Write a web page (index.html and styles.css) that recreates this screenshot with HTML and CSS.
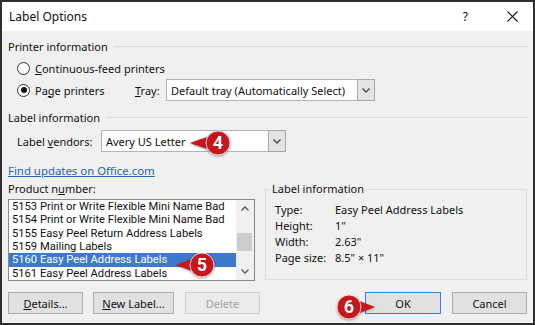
FILE: index.html
```html
<!DOCTYPE html>
<html>
<head>
<meta charset="utf-8">
<link rel="stylesheet" href="styles.css">
</head>
<body>
<div class="window">
  <div class="titlebar">
    <span class="title">Label Options</span>
    <span class="help">?</span>
    <svg class="close" width="11" height="11" viewBox="0 0 11 11"><path d="M0.5 0.5L10.5 10.5M10.5 0.5L0.5 10.5" stroke="#111" stroke-width="1.1" fill="none"/></svg>
  </div>
  <div class="body">
    <div class="section-title"><span>Printer information</span><span class="rule"></span></div>
    <div class="row radio-row r1">
      <span class="radio"></span><span><u>C</u>ontinuous-feed printers</span>
    </div>
    <div class="row radio-row">
      <div class="radio-opt"><span class="radio checked"></span><span>Pa<u>g</u>e printers</span></div>
      <span class="tray-label"><u>T</u>ray:</span>
      <div class="combo tray">
        <span class="combo-text">Default tray (Automatically Select)</span>
        <span class="combo-btn"><svg width="8" height="5" viewBox="0 0 8 5"><path d="M0.5 0.5L4 4L7.5 0.5" stroke="#444" stroke-width="1.3" fill="none"/></svg></span>
      </div>
    </div>
    <div class="section-title s2"><span>Label information</span><span class="rule"></span></div>
    <div class="row vendor-row">
      <span class="vendor-label">Label <u>v</u>endors:</span>
      <div class="combo vendor">
        <span class="combo-text">Avery US Letter</span>
        <span class="combo-btn"><svg width="8" height="5" viewBox="0 0 8 5"><path d="M0.5 0.5L4 4L7.5 0.5" stroke="#444" stroke-width="1.3" fill="none"/></svg></span>
      </div>
    </div>
    <a class="link">Find updates on Office.com</a>
    <div class="lower">
      <div class="left">
        <div class="pn-label">Product n<u>u</u>mber:</div>
        <div class="listbox">
          <ul class="items">
            <li>5153 Print or Write Flexible Mini Name Bad</li>
            <li>5154 Print or Write Flexible Mini Name Bad</li>
            <li>5155 Easy Peel Return Address Labels</li>
            <li>5159 Mailing Labels</li>
            <li class="sel">5160 Easy Peel Address Labels</li>
            <li>5161 Easy Peel Address Labels</li>
          </ul>
          <div class="scrollbar">
            <span class="sb-btn"><svg width="8" height="5" viewBox="0 0 8 5"><path d="M0.5 4.5L4 1L7.5 4.5" stroke="#555" stroke-width="1.3" fill="none"/></svg></span>
            <span class="sb-track"><span class="sb-thumb"></span></span>
            <span class="sb-btn"><svg width="8" height="5" viewBox="0 0 8 5"><path d="M0.5 0.5L4 4L7.5 0.5" stroke="#555" stroke-width="1.3" fill="none"/></svg></span>
          </div>
        </div>
      </div>
      <fieldset class="groupbox">
        <legend>Label information</legend>
        <div class="info-row"><span class="k">Type:</span><span>Easy Peel Address Labels</span></div>
        <div class="info-row"><span class="k">Height:</span><span>1"</span></div>
        <div class="info-row"><span class="k">Width:</span><span>2.63"</span></div>
        <div class="info-row"><span class="k">Page size:</span><span>8.5" × 11"</span></div>
      </fieldset>
    </div>
    <div class="buttons">
      <button class="btn w75"><u>D</u>etails...</button>
      <button class="btn w81"><u>N</u>ew Label...</button>
      <button class="btn w75 disabled">Delete</button>
      <button class="btn w76 default">OK</button>
      <button class="btn w75">Cancel</button>
    </div>
  </div>

  <div class="badge b4">
    <svg width="42" height="26" viewBox="0 0 42 26"><path d="M0 13Q9 9.5 19 6.5L19 19.5Q9 16.5 0 13Z" fill="#c8161d"/><circle cx="28" cy="13" r="12" fill="#c8161d" stroke="#fff" stroke-width="0.8"/></svg>
    <span class="digit">4</span>
  </div>
  <div class="badge b5">
    <svg width="40" height="26" viewBox="0 0 40 26"><path d="M0 13Q9 9.5 17 6.5L17 19.5Q9 16.5 0 13Z" fill="#c8161d"/><circle cx="26" cy="13" r="12" fill="#c8161d" stroke="#fff" stroke-width="0.8"/></svg>
    <span class="digit">5</span>
  </div>
  <div class="badge b6">
    <svg width="40" height="26" viewBox="0 0 40 26"><path d="M40 13Q31 9.5 23 6.5L23 19.5Q31 16.5 40 13Z" fill="#c8161d"/><circle cx="14" cy="13" r="12" fill="#c8161d" stroke="#fff" stroke-width="0.8"/></svg>
    <span class="digit">6</span>
  </div>
</div>
</body>
</html>
```

FILE: styles.css
```css
* { box-sizing: border-box; }
html, body { margin: 0; padding: 0; }
body {
  width: 535px;
  height: 325px;
  overflow: hidden;
  font-family: "Noto Sans", "Open Sans", sans-serif;
  font-size: 11px;
  color: #111;
}
.window {
  position: relative;
  width: 535px;
  height: 325px;
  border: 2px solid #2e2e2e;
  background: #f0f0f0;
  display: flex;
  flex-direction: column;
}
.titlebar {
  height: 29px;
  background: #fff;
  display: flex;
  align-items: center;
  padding: 0 15px 1px 7px;
  flex: none;
}
.title { font-size: 12px; flex: 1; }
.help { font-size: 12px; margin-right: 39px; }
.close { display: block; }
.body {
  flex: 1;
  padding: 7px 6px 0 6px;
  display: flex;
  flex-direction: column;
}
.section-title {
  height: 16px;
  display: flex;
  align-items: center;
  gap: 6px;
}
.section-title .rule {
  flex: 1;
  height: 1px;
  background: #dadada;
  margin-right: -1px;
}
.s2 { margin-top: 8px; }
.row {
  height: 22px;
  display: flex;
  align-items: center;
}
.radio-row { padding-left: 9px; }
.r1 { margin-top: 3px; }
.radio {
  width: 13px;
  height: 13px;
  border-radius: 50%;
  border: 1px solid #333;
  background: #fff;
  margin-right: 5px;
  flex: none;
  position: relative;
}
.radio.checked::after {
  content: "";
  position: absolute;
  left: 2.5px;
  top: 2.5px;
  width: 6px;
  height: 6px;
  border-radius: 50%;
  background: #111;
}
.radio-opt {
  width: 118px;
  display: flex;
  align-items: center;
}
.tray-label { width: 31px; }
.combo {
  height: 22px;
  display: flex;
  border: 1px solid #b4b4b4;
  background: #fff;
}
.combo.tray { width: 209px; }
.combo.vendor { width: 185px; }
.combo-text {
  flex: 1;
  display: flex;
  align-items: center;
  padding-left: 4px;
  white-space: nowrap;
  overflow: hidden;
}
.combo-btn {
  width: 18px;
  background: #e4e4e4;
  border: 1px solid #a8a8a8;
  margin: -1px -1px -1px 0;
  display: flex;
  align-items: center;
  justify-content: center;
}
.vendor-row { margin-top: 5px; padding-left: 9px; }
.vendor-label { width: 84px; }
.link {
  margin-top: 11px;
  height: 16px;
  line-height: 16px;
  font-size: 11.4px;
  color: #1f64b8;
  text-decoration: underline;
  align-self: flex-start;
}
.lower {
  margin-top: 2px;
  display: flex;
  gap: 10px;
}
.left { width: 247px; }
.pn-label { height: 16px; line-height: 16px; }
.listbox {
  margin-top: 2px;
  height: 82px;
  border: 1px solid #8a8a8a;
  background: #fff;
  display: flex;
}
.items {
  list-style: none;
  margin: 0;
  padding: 0;
  flex: 1;
  overflow: hidden;
  font-family: "Roboto", "Noto Sans", sans-serif;
  font-size: 11.2px;
}
.items li {
  height: 13.33px;
  line-height: 13.33px;
  padding-left: 3px;
  white-space: nowrap;
  overflow: hidden;
}
.items li.sel { background: #3d7acb; color: #fff; }
.scrollbar {
  width: 18px;
  background: #f0f0f0;
  display: flex;
  flex-direction: column;
}
.sb-btn {
  height: 17px;
  display: flex;
  align-items: center;
  justify-content: center;
}
.sb-track {
  flex: 1;
  padding: 16px 2px 0 1px;
}
.sb-thumb {
  display: block;
  height: 18px;
  background: #cdcdcd;
}
.groupbox {
  flex: 1;
  margin: 0;
  padding: 5px 9px 13px 9px;
  border: 1px solid #dcdcdc;
  min-width: 0;
  height: 99px;
}
.groupbox legend {
  padding: 0 1px;
  margin-left: -4px;
  line-height: 16px;
  font-size: 11px;
}
.info-row {
  height: 16px;
  line-height: 16px;
  display: flex;
}
.info-row .k { width: 60px; }
.buttons {
  margin-top: 11px;
  display: flex;
  gap: 10px;
}
.btn {
  height: 22px;
  font-family: inherit;
  font-size: 11px;
  color: #111;
  background: #e1e1e1;
  border: 1px solid #adadad;
  padding: 0;
  margin: 0;
}
.w75 { width: 75px; }
.w76 { width: 76px; }
.w81 { width: 81px; }
.btn:nth-child(3) { margin-left: 1px; }
.btn.disabled { color: #a3a3a3; background: #ebebeb; border-color: #cdcdcd; }
.btn.default { margin-left: auto; border: 1px solid #2f86d8; margin-right: 1px; }
.badge {
  position: absolute;
  height: 26px;
  filter: drop-shadow(0 1px 1px rgba(0,0,0,0.35));
}
.badge svg { display: block; }
.badge .digit {
  position: absolute;
  top: 0;
  width: 24px;
  height: 26px;
  line-height: 26px;
  text-align: center;
  color: #fff;
  font-family: "Roboto", "DejaVu Sans", sans-serif;
  font-weight: 700;
  font-size: 18px;
}
.b4 { left: 188px; top: 128px; }
.b4 .digit { left: 16px; }
.b5 { left: 174px; top: 250px; }
.b5 .digit { left: 14px; }
.b6 { left: 333px; top: 292px; }
.b6 .digit { left: 2px; }
```
